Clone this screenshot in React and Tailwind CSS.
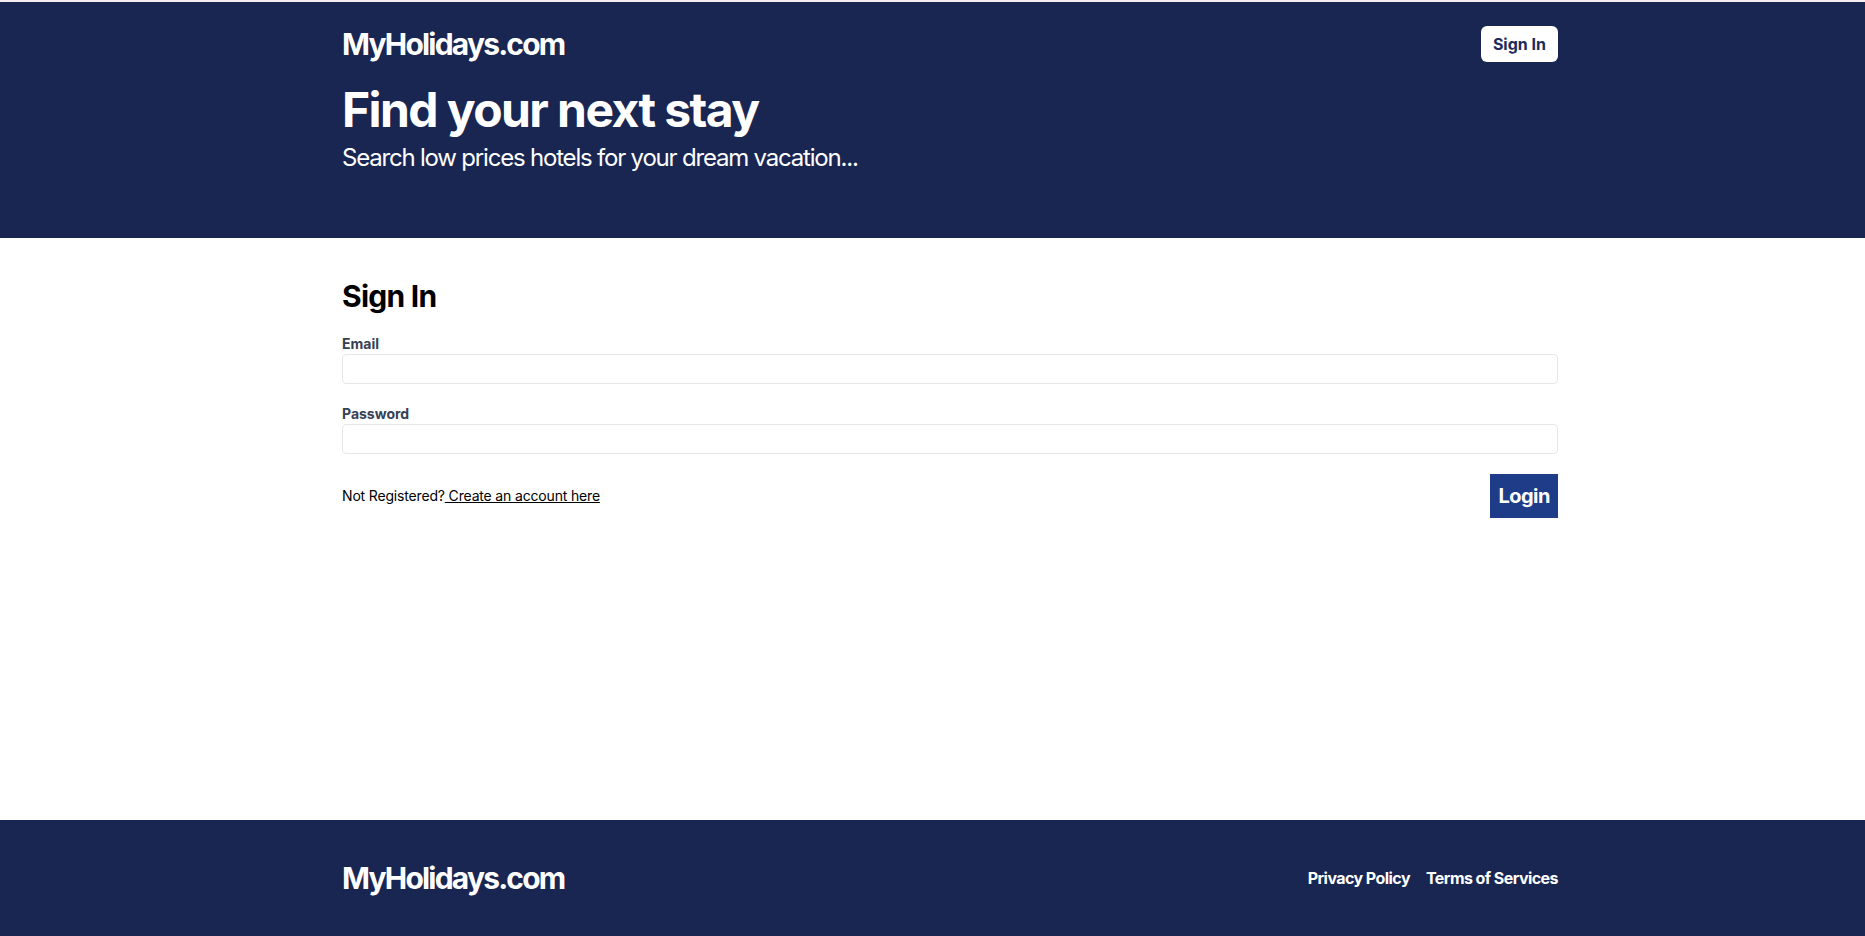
import React from "react";

export default function App() {
  return (
    <div className="min-h-screen flex flex-col bg-white" style={{ fontFamily: "Inter, 'Noto Sans', sans-serif" }}>
      <div className="h-[2px] bg-[#f4eeee]" />
      <div className="bg-[#192652] pt-6 pb-16">
        <div className="ml-[342px] w-[1216px] flex flex-col gap-6">
          <div className="flex justify-between items-center">
            <span className="text-3xl text-white font-bold tracking-[-0.06em]">MyHolidays.com</span>
            <a className="flex items-center h-9 px-3 bg-white rounded-md text-[#1c2a5c] font-bold">Sign In</a>
          </div>
          <div className="flex flex-col gap-2">
            <h1 className="text-5xl text-white font-bold tracking-[-0.033em]">Find your next stay</h1>
            <p className="text-2xl text-white tracking-[-0.05em]">Search low prices hotels for your dream vacation...</p>
          </div>
        </div>
      </div>
      <div className="flex-1 py-10">
        <form className="ml-[342px] w-[1216px] flex flex-col gap-5">
          <h2 className="text-3xl font-bold text-black tracking-[-0.025em]">Sign In</h2>
          <label className="text-gray-700 text-sm font-bold flex-1">
            Email
            <input type="email" className="block border border-gray-200 rounded w-full py-1 px-2 font-normal" />
          </label>
          <label className="text-gray-700 text-sm font-bold flex-1">
            Password
            <input type="password" className="block border border-gray-200 rounded w-full py-1 px-2 font-normal" />
          </label>
          <span className="flex items-center justify-between">
            <span className="text-sm text-black tracking-[-0.012em]">
              Not Registered?
              <a className="underline"> Create an account here</a>
            </span>
            <button type="button" className="bg-[#1f3c88] text-white p-2 font-bold text-xl tracking-[-0.025em]">Login</button>
          </span>
        </form>
      </div>
      <div className="bg-[#192652] py-10">
        <div className="ml-[342px] w-[1216px] flex justify-between items-center">
          <span className="text-3xl text-white font-bold tracking-[-0.06em]">MyHolidays.com</span>
          <span className="text-white font-bold tracking-[-0.035em] flex gap-4">
            <p className="cursor-pointer">Privacy Policy</p>
            <p className="cursor-pointer">Terms of Services</p>
          </span>
        </div>
      </div>
    </div>
  );
}
